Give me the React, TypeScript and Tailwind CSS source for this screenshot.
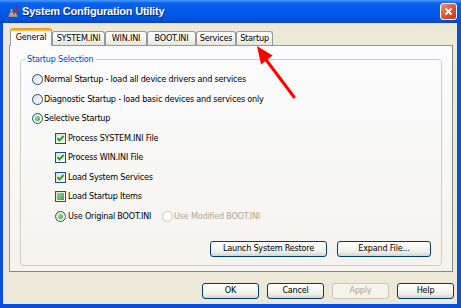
import React from "react";

type TabProps = { label: string; width: string; active?: boolean };

const Tab = ({ label, width, active }: TabProps) => {
  if (active) {
    return (
      <div
        className={`relative z-10 -mb-px flex h-[18px] ${width} flex-col overflow-hidden rounded-t-[3px] border-x border-[#919b9c] bg-[#fcfcfe]`}
      >
        <div className="h-[3px] bg-[linear-gradient(180deg,#e68b2c,#ffc73c)]" />
        <div className="flex flex-1 items-center justify-center pb-px">{label}</div>
      </div>
    );
  }
  return (
    <div
      className={`flex h-[14px] ${width} items-center justify-center rounded-t-[3px] border-x border-t border-[#919b9c] bg-[linear-gradient(180deg,#ffffff,#f3f3ef_60%,#e5e4dc)]`}
    >
      {label}
    </div>
  );
};

const Radio = ({ checked, disabled }: { checked?: boolean; disabled?: boolean }) => (
  <span
    className={`flex h-[11px] w-[11px] shrink-0 items-center justify-center rounded-full border ${
      disabled
        ? "border-[#cac8bb] bg-white"
        : "border-[#1c5180] bg-[linear-gradient(135deg,#dcdcd7,#ffffff)]"
    }`}
  >
    {checked && (
      <span className="h-[5px] w-[5px] rounded-full bg-[radial-gradient(circle_at_35%_35%,#8ae88a,#21a121)]" />
    )}
  </span>
);

const Check = ({ state }: { state: "on" | "mixed" }) => (
  <span className="flex h-[11px] w-[11px] shrink-0 items-center justify-center border border-[#1c5180] bg-[linear-gradient(135deg,#dcdcd7,#ffffff)]">
    {state === "on" ? (
      <svg width="9" height="9" viewBox="0 0 9 9">
        <path d="M1.5 4.2 L3.6 6.4 L7.6 2" fill="none" stroke="#21a121" strokeWidth="2" />
      </svg>
    ) : (
      <span className="h-[7px] w-[7px] bg-[linear-gradient(135deg,#8ed88e,#3ea63e)]" />
    )}
  </span>
);

const Button = ({ label, width, disabled }: { label: string; width: string; disabled?: boolean }) => (
  <div
    className={`flex h-[16px] ${width} items-center justify-center rounded-[3px] border ${
      disabled
        ? "border-[#c9c7ba] bg-[#f5f4ea] text-[#aca899]"
        : "border-[#003c74] bg-[linear-gradient(180deg,#ffffff,#f0f0ea_70%,#d8d2c6)]"
    }`}
  >
    {label}
  </div>
);

const Row = ({ children, indent }: { children: React.ReactNode; indent: string }) => (
  <div className={`flex h-[19.5px] items-center ${indent}`}>{children}</div>
);

const App = () => {
  return (
    <div className="relative h-[308px] w-[461px] overflow-hidden bg-[#0a4fdc] font-['DejaVu_Sans_Condensed','Liberation_Sans',sans-serif] text-[9px] tracking-[-0.2px] text-black">
      {/* title bar */}
      <div className="flex h-[23px] items-center bg-[linear-gradient(180deg,#4a9bff_0%,#0a62ee_14%,#0058e8_50%,#0054e2_80%,#0046c8_100%)] pl-[7px] pr-[3px]">
        <svg width="12" height="12" viewBox="0 0 12 12" className="shrink-0">
          <path d="M1 11 L3 6 L9 6 L11 11 Z" fill="#b8b8b0" stroke="#505050" strokeWidth="0.8" />
          <path d="M3 6 L4 3 L6 3 L5 6 Z" fill="#d8d8d0" stroke="#505050" strokeWidth="0.6" />
          <path d="M6.5 8 L11 1" stroke="#e01010" strokeWidth="1.4" />
          <path d="M2 9 L10 9" stroke="#707070" strokeWidth="0.6" />
        </svg>
        <span className="ml-[3px] font-['Liberation_Sans',sans-serif] text-[11px] font-bold tracking-[-0.2px] text-white [text-shadow:1px_1px_0_#0a2a8a]">
          System Configuration Utility
        </span>
        <div className="ml-auto mr-[1px] flex h-[17px] w-[17px] items-center justify-center rounded-[3px] border border-white bg-[linear-gradient(135deg,#f0926e,#dd5a30_50%,#c2391a)]">
          <svg width="9" height="9" viewBox="0 0 9 9">
            <path d="M1.5 1.5 L7.5 7.5 M7.5 1.5 L1.5 7.5" stroke="#ffffff" strokeWidth="1.8" />
          </svg>
        </div>
      </div>

      {/* client area */}
      <div className="ml-[3px] mr-[4px] flex h-[281px] flex-col bg-[#ece9d8] pt-[5px]">
        <div className="flex h-[17px] items-end pl-[7px]">
          <Tab label="General" width="w-[42px]" active />
          <Tab label="SYSTEM.INI" width="w-[53px]" />
          <Tab label="WIN.INI" width="w-[42px]" />
          <Tab label="BOOT.INI" width="w-[49px]" />
          <Tab label="Services" width="w-[40px]" />
          <Tab label="Startup" width="w-[37px]" />
        </div>

        <div className="ml-[6px] flex h-[227px] w-[444px] flex-col border border-[#919b9c] border-r-[#7f8a8b] border-b-[#7f8a8b] bg-[linear-gradient(180deg,#fcfcfe,#f4f3ee)] px-[10px] pt-[7px]">
          <fieldset className="flex flex-col rounded-[4px] border border-[#d0d0bf]">
            <legend className="ml-[4px] px-[2px] leading-[12px] text-[#0046d5]">Startup Selection</legend>
            <div className="flex flex-col pt-[5px]">
              <Row indent="pl-[11px]">
                <Radio />
                <span className="ml-[1px]">Normal Startup - load all device drivers and services</span>
              </Row>
              <Row indent="pl-[11px]">
                <Radio />
                <span className="ml-[1px]">Diagnostic Startup - load basic devices and services only</span>
              </Row>
              <Row indent="pl-[11px]">
                <Radio checked />
                <span className="ml-[1px]">Selective Startup</span>
              </Row>
              <Row indent="pl-[34px]">
                <Check state="on" />
                <span className="ml-[2px]">Process SYSTEM.INI File</span>
              </Row>
              <Row indent="pl-[34px]">
                <Check state="on" />
                <span className="ml-[2px]">Process WIN.INI File</span>
              </Row>
              <Row indent="pl-[34px]">
                <Check state="on" />
                <span className="ml-[2px]">Load System Services</span>
              </Row>
              <Row indent="pl-[34px]">
                <Check state="mixed" />
                <span className="ml-[2px]">Load Startup Items</span>
              </Row>
              <Row indent="pl-[34px]">
                <div className="flex w-[107px] items-center">
                  <Radio checked />
                  <span className="ml-[2px]">Use Original BOOT.INI</span>
                </div>
                <Radio disabled />
                <span className="ml-[1px] text-[#aca899]">Use Modified BOOT.INI</span>
              </Row>
            </div>
            <div className="mt-[15px] mb-[8px] flex justify-end gap-[10px] pr-[10px]">
              <Button label="Launch System Restore" width="w-[117px]" />
              <Button label="Expand File..." width="w-[94px]" />
            </div>
          </fieldset>
        </div>

        <div className="mt-[11px] flex justify-end gap-[8px] pr-[3px]">
          <Button label="OK" width="w-[57px]" />
          <Button label="Cancel" width="w-[57px]" />
          <Button label="Apply" width="w-[57px]" disabled />
          <Button label="Help" width="w-[57px]" />
        </div>
      </div>

      {/* red annotation arrow */}
      <svg className="pointer-events-none absolute left-0 top-0" width="461" height="308">
        <path d="M294 97 L264 57" stroke="#ff0000" strokeWidth="3" strokeLinecap="round" />
        <path d="M257 46 L272.5 55.5 L261 64.5 Z" fill="#ff0000" />
      </svg>
    </div>
  );
};

export default App;
